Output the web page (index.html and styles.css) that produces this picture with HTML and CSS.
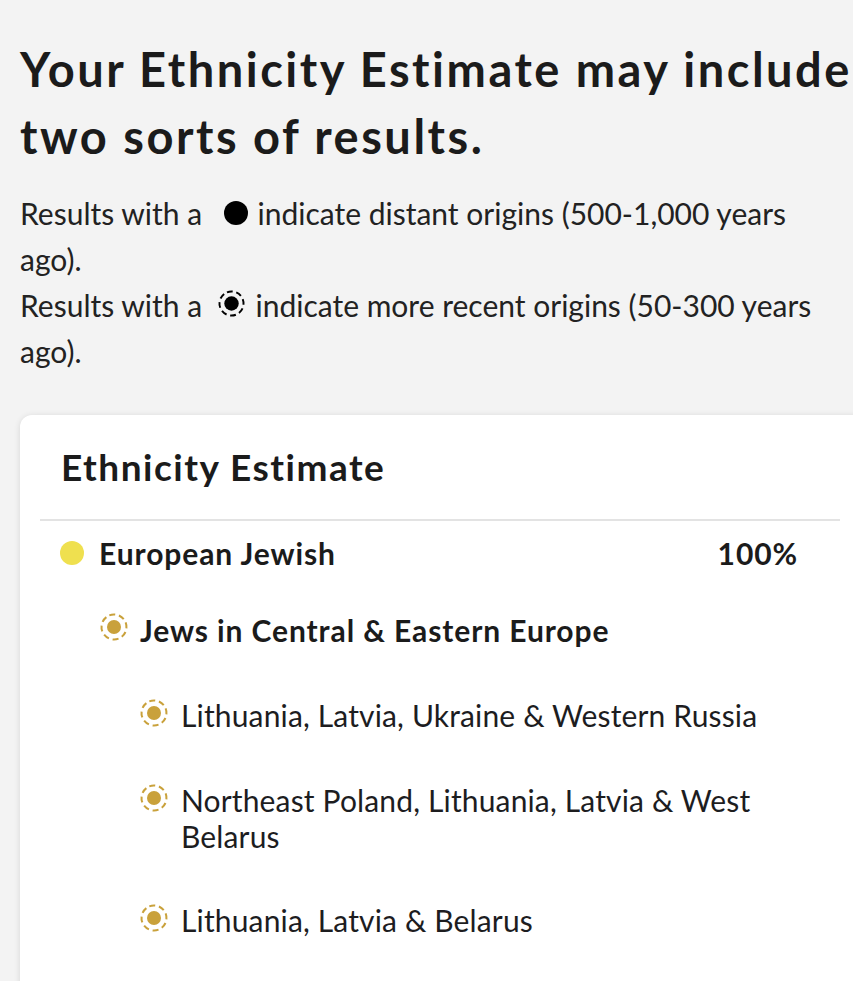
FILE: index.html
```html
<!DOCTYPE html>
<html lang="en">
<head>
<meta charset="utf-8">
<title>Ethnicity Estimate</title>
<link rel="stylesheet" href="styles.css">
</head>
<body>
<main class="page">
  <h1 class="title">Your Ethnicity Estimate may include two sorts of results.</h1>
  <p class="note"><span>Results with a</span> <svg class="legend-icon legend-solid" viewBox="0 0 24 24" aria-hidden="true"><circle cx="12" cy="12" r="12" fill="#000"/></svg> <span>indicate distant origins (500-1,000 years</span> <span>ago).</span></p>
  <p class="note"><span>Results with a</span> <svg class="legend-icon legend-dashed" viewBox="0 0 28 28" aria-hidden="true"><circle cx="14" cy="14" r="12.5" fill="none" stroke="#000" stroke-width="2" stroke-dasharray="6 3.8" transform="rotate(-112 14 14)"/><circle cx="14" cy="14" r="7.5" fill="#000"/></svg> <span>indicate more recent origins (50-300 years</span> <span>ago).</span></p>

  <section class="card">
    <h2 class="card-title">Ethnicity Estimate</h2>
    <div class="divider"></div>
    <ul class="regions">
      <li class="region region-top">
        <span class="dot dot-yellow"></span>
        <span class="region-name">European Jewish</span>
        <span class="region-pct">100%</span>
      </li>
      <li class="region region-sub">
        <svg class="ring" viewBox="0 0 28 28" aria-hidden="true"><circle cx="14" cy="14" r="12.5" fill="none" stroke="#c9a13b" stroke-width="2" stroke-dasharray="6 3.8" transform="rotate(-112 14 14)"/><circle cx="14" cy="14" r="7" fill="#c9a13b"/></svg>
        <span class="region-name">Jews in Central &amp; Eastern Europe</span>
      </li>
      <li class="region region-leaf">
        <svg class="ring" viewBox="0 0 28 28" aria-hidden="true"><circle cx="14" cy="14" r="12.5" fill="none" stroke="#c9a13b" stroke-width="2" stroke-dasharray="6 3.8" transform="rotate(-112 14 14)"/><circle cx="14" cy="14" r="7" fill="#c9a13b"/></svg>
        <span class="leaf-name">Lithuania, Latvia, Ukraine &amp; Western Russia</span>
      </li>
      <li class="region region-leaf">
        <svg class="ring" viewBox="0 0 28 28" aria-hidden="true"><circle cx="14" cy="14" r="12.5" fill="none" stroke="#c9a13b" stroke-width="2" stroke-dasharray="6 3.8" transform="rotate(-112 14 14)"/><circle cx="14" cy="14" r="7" fill="#c9a13b"/></svg>
        <span class="leaf-name">Northeast Poland, Lithuania, Latvia &amp; West Belarus</span>
      </li>
      <li class="region region-leaf">
        <svg class="ring" viewBox="0 0 28 28" aria-hidden="true"><circle cx="14" cy="14" r="12.5" fill="none" stroke="#c9a13b" stroke-width="2" stroke-dasharray="6 3.8" transform="rotate(-112 14 14)"/><circle cx="14" cy="14" r="7" fill="#c9a13b"/></svg>
        <span class="leaf-name">Lithuania, Latvia &amp; Belarus</span>
      </li>
    </ul>
  </section>
</main>
</body>
</html>
```

FILE: styles.css
```css
html, body {
  margin: 0;
  padding: 0;
  background: #f3f3f3;
  overflow: hidden;
}

body {
  font-family: Lato, "Liberation Sans", sans-serif;
  color: #1d1d1f;
}

.page {
  padding: 36px 0 0 20px;
}

.title {
  margin: 0;
  font-size: 47px;
  line-height: 67px;
  font-weight: 700;
  color: #1b1b1b;
  letter-spacing: 2.5px;
}

.note {
  margin: 0;
  font-size: 30px;
  line-height: 46px;
  color: #222;
  letter-spacing: 0;
  max-width: 815px;
}

.title + .note {
  margin-top: 20px;
}

.legend-icon {
  vertical-align: baseline;
}

.legend-solid {
  width: 24px;
  height: 24px;
  margin: 0 2px 0 14px;
}

.legend-dashed {
  width: 27px;
  height: 27px;
  margin: 0 3px 0 8px;
}

.card {
  margin-top: 41px;
  width: 880px;
  background: #fff;
  border-radius: 12px;
  box-shadow: 0 1px 6px rgba(0, 0, 0, 0.12);
  padding: 30px 0 60px 20px;
}

.card-title {
  margin: 0 0 0 21px;
  font-size: 37px;
  line-height: 44px;
  font-weight: 700;
  color: #1b1b1b;
  letter-spacing: 1.5px;
}

.divider {
  margin-top: 30px;
  width: 800px;
  height: 2px;
  background: #e3e3e3;
}

.regions {
  list-style: none;
  margin: 0;
  padding: 0;
  width: 758px;
}

.region {
  display: flex;
  align-items: flex-start;
  font-size: 30px;
  line-height: 35px;
}

.region-top {
  padding: 15px 0 0 20px;
}

.region-sub {
  padding: 42px 0 0 60px;
}

.region-leaf {
  padding: 49px 0 0 100px;
  line-height: 36px;
}

.region-leaf:last-child {
  padding-top: 48px;
}

.dot {
  flex: none;
  width: 24px;
  height: 24px;
  border-radius: 50%;
  margin: 5px 15px 0 0;
}

.dot-yellow {
  background: #efe04f;
}

.ring {
  flex: none;
  width: 28px;
  height: 28px;
  margin: 0 12px 0 0;
}

.region-leaf .ring {
  margin: 2px 13px 0 0;
}

.region-name {
  font-weight: 700;
  color: #1b1b1b;
  letter-spacing: 0.9px;
}

.region-pct {
  margin-left: auto;
  font-weight: 700;
  color: #1b1b1b;
  letter-spacing: 0.9px;
}

.leaf-name {
  color: #1d1d1f;
  letter-spacing: 0.15px;
  max-width: 600px;
}
```
